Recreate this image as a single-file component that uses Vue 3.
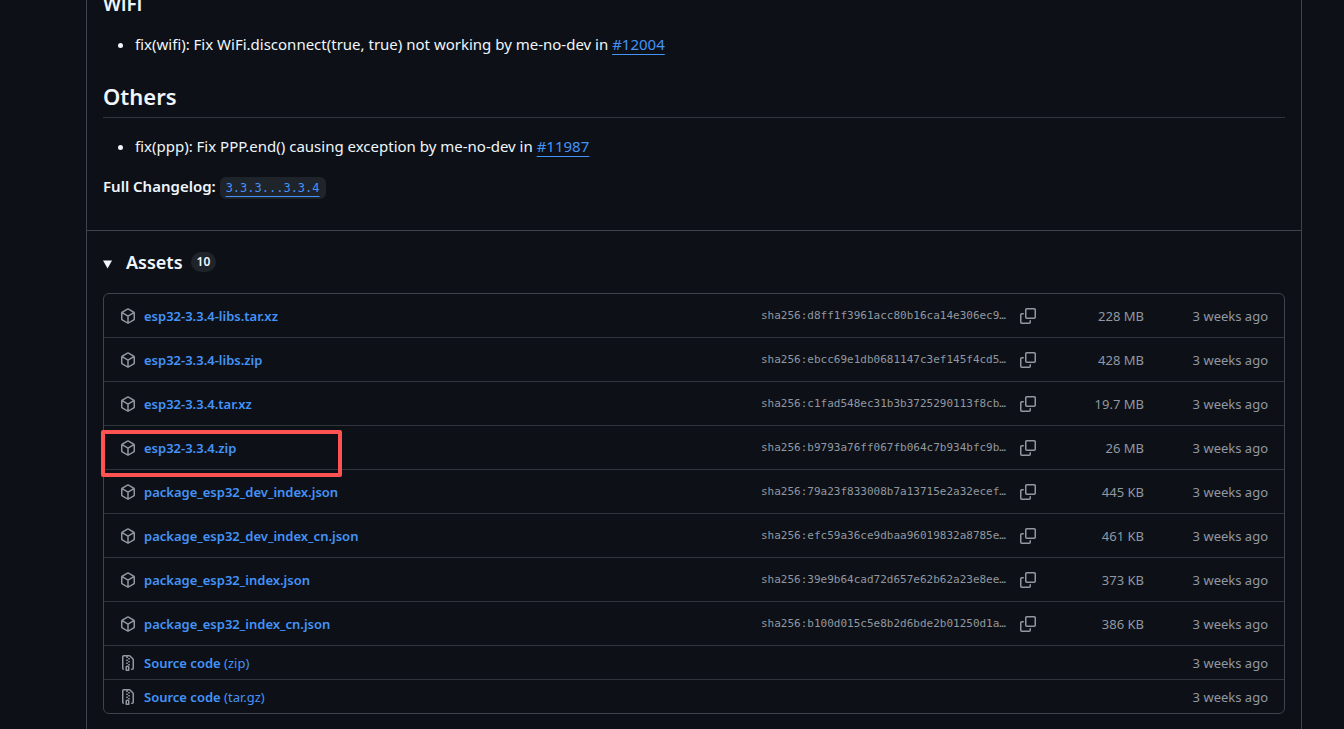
<template>
  <main class="page">
    <article class="release">
      <section class="notes">
        <h3>WiFi</h3>
        <ul class="changes">
          <li>fix(wifi): Fix WiFi.disconnect(true, true) not working by me-no-dev in <a href="#12004">#12004</a></li>
        </ul>
        <h2>Others</h2>
        <ul class="changes">
          <li>fix(ppp): Fix PPP.end() causing exception by me-no-dev in <a href="#11987">#11987</a></li>
        </ul>
        <p><strong>Full Changelog:</strong> <a class="compare" href="#compare"><code>3.3.3...3.3.4</code></a></p>
      </section>

      <details class="assets" open>
        <summary>
          <svg class="caret" viewBox="0 0 9 9"><path d="M0 0.5h9L4.5 8.5z" /></svg>
          <span class="assets-title">Assets</span>
          <span class="counter">{{ assets.length }}</span>
        </summary>
        <ul class="asset-list">
          <li v-for="item in assets" :key="item.name + item.note" :class="['asset', { source: item.note }]">
            <svg class="icon" viewBox="0 0 16 16"><path :d="item.note ? zipIcon : packageIcon" /></svg>
            <a class="asset-name" :href="'#' + item.name">
              <b>{{ item.name }}</b><span v-if="item.note"> ({{ item.note }})</span>
            </a>
            <template v-if="item.sha">
              <span class="sha">sha256:{{ item.sha }}…</span>
              <button class="copy" type="button" :aria-label="'Copy ' + item.name" @click="copy(item.sha)">
                <svg class="icon" viewBox="0 0 16 16"><path :d="copyIcon" /></svg>
              </button>
              <span class="size">{{ item.size }}</span>
            </template>
            <span class="date">3 weeks ago</span>
            <div v-if="item.marked" class="marker"></div>
          </li>
        </ul>
      </details>
    </article>
  </main>
</template>

<script setup>
const assets = [
  { name: 'esp32-3.3.4-libs.tar.xz', sha: 'd8ff1f3961acc80b16ca14e306ec9', size: '228 MB' },
  { name: 'esp32-3.3.4-libs.zip', sha: 'ebcc69e1db0681147c3ef145f4cd5', size: '428 MB' },
  { name: 'esp32-3.3.4.tar.xz', sha: 'c1fad548ec31b3b3725290113f8cb', size: '19.7 MB' },
  { name: 'esp32-3.3.4.zip', sha: 'b9793a76ff067fb064c7b934bfc9b', size: '26 MB', marked: true },
  { name: 'package_esp32_dev_index.json', sha: '79a23f833008b7a13715e2a32ecef', size: '445 KB' },
  { name: 'package_esp32_dev_index_cn.json', sha: 'efc59a36ce9dbaa96019832a8785e', size: '461 KB' },
  { name: 'package_esp32_index.json', sha: '39e9b64cad72d657e62b62a23e8ee', size: '373 KB' },
  { name: 'package_esp32_index_cn.json', sha: 'b100d015c5e8b2d6bde2b01250d1a', size: '386 KB' },
  { name: 'Source code', note: 'zip' },
  { name: 'Source code', note: 'tar.gz' },
];

const packageIcon =
  'm8.878.392 5.25 3.045c.54.314.872.89.872 1.514v6.098a1.75 1.75 0 0 1-.872 1.514l-5.25 3.045a1.75 1.75 0 0 1-1.756 0l-5.25-3.045A1.75 1.75 0 0 1 1 11.049V4.951c0-.624.332-1.201.872-1.514L7.122.392a1.75 1.75 0 0 1 1.756 0ZM7.875 1.69l-4.63 2.685L8 7.133l4.755-2.758-4.63-2.685a.248.248 0 0 0-.25 0ZM2.5 5.677v5.372c0 .09.047.171.125.216l4.625 2.683V8.432Zm6.25 8.271 4.625-2.683a.25.25 0 0 0 .125-.216V5.677L8.75 8.432Z';
const zipIcon =
  'M3.5 1.75v11.5c0 .09.048.173.126.217a.75.75 0 0 1-.752 1.298A1.748 1.748 0 0 1 2 13.25V1.75C2 .784 2.784 0 3.75 0h5.586c.464 0 .909.185 1.237.513l2.914 2.914c.329.328.513.773.513 1.237v8.586A1.75 1.75 0 0 1 12.25 15h-.5a.75.75 0 0 1 0-1.5h.5a.25.25 0 0 0 .25-.25V4.664a.25.25 0 0 0-.073-.177L9.513 1.573a.25.25 0 0 0-.177-.073H7.25a.75.75 0 0 1 0 1.5h-.5a.75.75 0 0 1 0-1.5h-3a.25.25 0 0 0-.25.25Zm3.75 8.75h.5c.966 0 1.75.784 1.75 1.75v3a.75.75 0 0 1-.75.75h-2.5a.75.75 0 0 1-.75-.75v-3c0-.966.784-1.75 1.75-1.75ZM6 5.25a.75.75 0 0 1 .75-.75h.5a.75.75 0 0 1 0 1.5h-.5A.75.75 0 0 1 6 5.25Zm.75 2.25h.5a.75.75 0 0 1 0 1.5h-.5a.75.75 0 0 1 0-1.5ZM8 6.75A.75.75 0 0 1 8.75 6h.5a.75.75 0 0 1 0 1.5h-.5A.75.75 0 0 1 8 6.75ZM8.75 3h.5a.75.75 0 0 1 0 1.5h-.5a.75.75 0 0 1 0-1.5ZM8 9.75A.75.75 0 0 1 8.75 9h.5a.75.75 0 0 1 0 1.5h-.5A.75.75 0 0 1 8 9.75Zm-1 2.5v2.25h1v-2.25a.25.25 0 0 0-.25-.25h-.5a.25.25 0 0 0-.25.25Z';
const copyIcon =
  'M0 6.75C0 5.784.784 5 1.75 5h1.5a.75.75 0 0 1 0 1.5h-1.5a.25.25 0 0 0-.25.25v7.5c0 .138.112.25.25.25h7.5a.25.25 0 0 0 .25-.25v-1.5a.75.75 0 0 1 1.5 0v1.5A1.75 1.75 0 0 1 9.25 16h-7.5A1.75 1.75 0 0 1 0 14.25ZM5 1.75C5 .784 5.784 0 6.75 0h7.5C15.216 0 16 .784 16 1.75v7.5A1.75 1.75 0 0 1 14.25 11h-7.5A1.75 1.75 0 0 1 5 9.25Zm1.75-.25a.25.25 0 0 0-.25.25v7.5c0 .138.112.25.25.25h7.5a.25.25 0 0 0 .25-.25v-7.5a.25.25 0 0 0-.25-.25Z';

function copy(sha) {
  navigator.clipboard?.writeText('sha256:' + sha);
}
</script>

<style>
body {
  margin: 0;
  background: #0d1117;
}
</style>

<style scoped>
.page {
  display: flow-root;
  padding: 0 42px 0 86px;
  color: #f0f6fc;
  font-family: "Segoe UI", "Noto Sans", sans-serif;
  font-size: 15px;
  line-height: 24px;
}

.release {
  border: solid #3d444d;
  border-width: 0 1px;
}

/* 页面已向下滚动,第一个标题被顶部截断 */
.notes {
  margin-top: -8px;
  padding: 0 16px 32px;
}

h2,
h3 {
  margin: 0 0 16px;
  font-weight: 600;
}

h3 {
  font-size: 19px;
  line-height: 24px;
}

h2 {
  padding-bottom: 5px;
  border-bottom: 1px solid #2f353d;
  font-size: 22px;
  line-height: 32px;
}

.changes {
  margin: 0 0 16px;
  padding-left: 32px;
}

.changes + h2 {
  margin-top: 24px;
}

.notes p {
  margin: 0;
}

.notes strong {
  font-weight: 600;
}

a {
  color: #4493f8;
}

.notes a {
  text-underline-offset: 4px;
}

.compare code {
  padding: 4px 6px;
  border-radius: 6px;
  background: #1e242a;
  font-family: Consolas, "DejaVu Sans Mono", monospace;
  font-size: 12px;
  line-height: 16px;
}

.assets {
  padding: 16px 16px 15px;
  border-top: 1px solid #3d444d;
}

summary {
  display: flex;
  align-items: center;
  height: 30px;
  margin-bottom: 16px;
  cursor: pointer;
}

.caret {
  width: 9px;
  height: 9px;
  margin-top: 4px;
  fill: #f0f6fc;
}

.assets-title {
  margin: 0 8px 0 14px;
  font-size: 18px;
  font-weight: 600;
}

.counter {
  padding: 0 6px;
  border-radius: 20px;
  background: #1f242b;
  font-size: 12px;
  font-weight: 600;
  line-height: 20px;
}

.asset-list {
  margin: 0;
  padding: 0;
  border: 1px solid #3d444d;
  border-radius: 6px;
  list-style: none;
}

.asset {
  position: relative;
  display: flex;
  align-items: center;
  height: 43px;
  padding: 0 16px;
  color: #9198a1;
  font-size: 13px;
}

.asset.source {
  height: 33px;
}

.asset + .asset {
  border-top: 1px solid #2f353d;
}

.icon {
  display: block;
  flex: none;
  width: 16px;
  height: 16px;
  fill: #9198a1;
}

.asset-name {
  flex: 1;
  margin-left: 8px;
  text-decoration: none;
}

.asset-name b {
  font-weight: 600;
}

.sha {
  font-family: "DejaVu Sans Mono", monospace;
  font-size: 11px;
}

.copy {
  margin: 0 0 0 8px;
  padding: 6px;
  border: none;
  background: none;
  cursor: pointer;
}

.size {
  width: 102px;
  text-align: right;
}

.date {
  width: 124px;
  text-align: right;
}

.marker {
  position: absolute;
  z-index: 1;
  top: 4px;
  left: -3px;
  width: 233px;
  height: 39px;
  border: 4px solid #ff5252;
  border-radius: 2px;
  pointer-events: none;
}
</style>
